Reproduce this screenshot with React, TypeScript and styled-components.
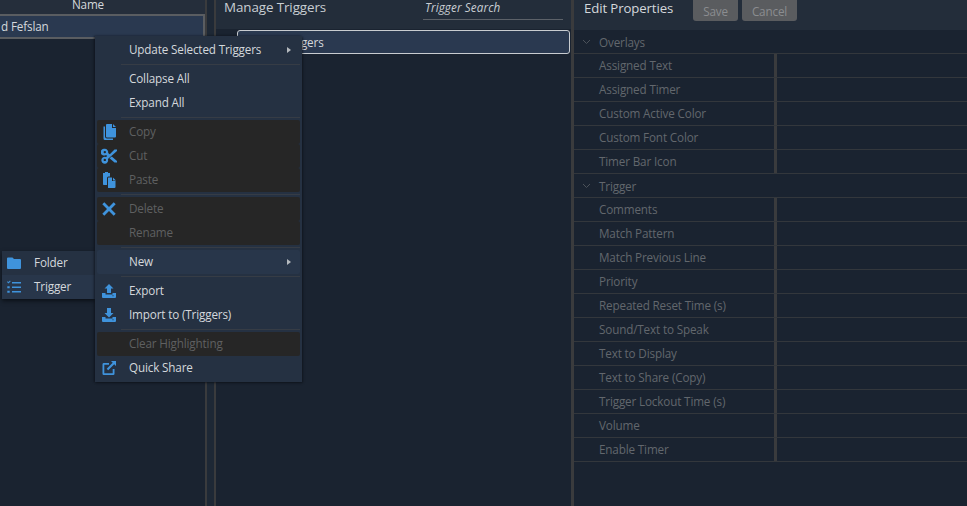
import React from "react";
import styled, { createGlobalStyle } from "styled-components";

const Global = createGlobalStyle`
  html, body { margin: 0; padding: 0; height: 506px; overflow: hidden; background: #1a2330; }
  #root { height: 506px; }
  * { box-sizing: border-box; }
`;

const Shell = styled.div`
  position: relative;
  width: 967px;
  height: 506px;
  display: grid;
  grid-template-columns: 205px 2px 7px 2px 355px 3px 1fr;
  background: #1a2330;
  font-family: "Open Sans", "Noto Sans", sans-serif;
  font-size: 11.7px;
  letter-spacing: -0.15px;
  overflow: hidden;
`;

const Splitter = styled.div`
  background: #3a3b3d;
`;

const Gutter = styled.div`
  background: #1e2835;
`;

const LeftPane = styled.section`
  display: flex;
  flex-direction: column;
`;

const ColumnHeader = styled.div`
  height: 14px;
  background: #252e3b;
  color: #d4d8dc;
  text-align: center;
  padding-right: 29px;
  line-height: 9px;
  overflow: hidden;
`;

const SelectedPlayer = styled.div`
  height: 25px;
  background: #2a3950;
  border-top: 2px solid #5a5d61;
  border-right: 2px solid #5a5d61;
  border-bottom: 2px solid #5a5d61;
  color: #d4d8dc;
  padding-left: 1px;
  line-height: 21px;
  white-space: nowrap;
  overflow: hidden;
`;

const MiddlePane = styled.section`
  display: flex;
  flex-direction: column;
`;

const PaneHeader = styled.header`
  height: 29px;
  background: #232d3a;
  display: flex;
  align-items: flex-start;
  flex-shrink: 0;
`;

const ManageTitle = styled.h2`
  margin: 0;
  padding-left: 8px;
  width: 207px;
  font-size: 13.4px;
  letter-spacing: -0.1px;
  line-height: 15px;
  font-weight: 400;
  color: #c9ced3;
`;

const SearchField = styled.div`
  width: 140px;
  height: 20px;
  border-bottom: 1px solid #5c6168;
  padding-left: 2px;
  color: #c9ced3;
  font-style: italic;
  letter-spacing: 0.1px;
  line-height: 15px;
`;

const TreeBody = styled.div`
  padding: 1px 1px 0 21px;
`;

const TreeRow = styled.div`
  height: 24px;
  background: #2a3950;
  border: 1px solid #c8ccd0;
  border-radius: 3px;
  color: #d4d8dc;
  display: flex;
  align-items: center;
  padding-left: 5px;
  gap: 26px;
`;

const TreeSwatch = styled.span`
  width: 12px;
  height: 12px;
  background: #6b727b;
  border-radius: 2px;
`;

const RightPane = styled.section`
  display: flex;
  flex-direction: column;
`;

const PropsHeader = styled.header`
  height: 30px;
  background: #232d3a;
  display: flex;
  align-items: flex-start;
  padding-left: 10px;
  flex-shrink: 0;
`;

const PropsTitle = styled.h2`
  margin: 0;
  width: 109px;
  font-size: 13.2px;
  letter-spacing: -0.1px;
  line-height: 16px;
  font-weight: 400;
  color: #d4d8dc;
`;

const HeaderButton = styled.button<{ $w: number }>`
  height: 21px;
  margin-right: 4px;
  padding: 0;
  width: ${(p) => p.$w}px;
  border: none;
  border-radius: 0 0 3px 3px;
  background: #5a5c5f;
  color: #8b8d90;
  font-family: inherit;
  font-size: 11.7px;
  letter-spacing: -0.15px;
  line-height: 18px;
`;

const Grid = styled.div`
  display: flex;
  flex-direction: column;
`;

const GroupRow = styled.div`
  height: 24px;
  border-bottom: 1px solid #33373c;
  display: flex;
  align-items: center;
  color: #62676d;
  padding-left: 8px;
  gap: 8px;
  & svg { flex-shrink: 0; }
`;

const PropRow = styled.div`
  height: 24px;
  border-bottom: 1px solid #33373c;
  display: grid;
  grid-template-columns: 200px 3px 1fr;
`;

const PropLabel = styled.div`
  color: #62676d;
  padding-left: 25px;
  line-height: 23px;
  white-space: nowrap;
`;

const PropDivider = styled.div`
  background: #3a3b3d;
`;

const Menu = styled.div`
  position: absolute;
  left: 95px;
  top: 36px;
  width: 207px;
  height: 346px;
  background: #253142;
  padding: 2px;
  box-shadow: -1px 0 2px rgba(10, 14, 20, 0.6), 1px 1px 2px rgba(10, 14, 20, 0.5);
  z-index: 2;
`;

const Item = styled.div<{ $disabled?: boolean; $active?: boolean }>`
  position: relative;
  height: 24px;
  line-height: 23px;
  padding-left: 32px;
  color: ${(p) => (p.$disabled ? "#5f6061" : "#d4d8dc")};
  background: ${(p) => (p.$disabled ? "#262626" : p.$active ? "#28364a" : "transparent")};
  border-radius: ${(p) => (p.$disabled || p.$active ? "2px" : "0")};
  white-space: nowrap;
`;

const ItemIcon = styled.span`
  position: absolute;
  left: 4px;
  top: 4px;
  width: 16px;
  height: 16px;
  color: #3f93dc;
  display: block;
  & svg { display: block; width: 16px; height: 16px; fill: currentColor; }
`;

const Caret = styled.span`
  position: absolute;
  right: 9px;
  top: 9px;
  width: 0;
  height: 0;
  border-left: 4px solid #b4b9be;
  border-top: 3px solid transparent;
  border-bottom: 3px solid transparent;
`;

const Separator = styled.div`
  height: 5px;
  padding: 2px 0 2px 24px;
  & > div { height: 1px; background: #363c45; }
`;

const SubMenu = styled.div`
  position: absolute;
  left: 2px;
  top: 251px;
  width: 93px;
  height: 48px;
  background: #253142;
  box-shadow: 0 2px 4px rgba(8, 11, 16, 0.8);
  z-index: 1;
`;

const SubItem = styled.div<{ $active?: boolean }>`
  position: relative;
  height: 24px;
  line-height: 23px;
  padding-left: 32px;
  color: #d4d8dc;
  background: ${(p) => (p.$active ? "#28364a" : "transparent")};
`;

const Chevron = () => (
  <svg width="9" height="9" viewBox="0 0 9 9" fill="none" stroke="#4c5259" strokeWidth="1">
    <path d="M1 3l3.5 3.5L8 3" />
  </svg>
);

const icons = {
  copy: "M6 0h5v4h4v8.500a1 1 0 0 1-1 1H6a1 1 0 0 1-1-1V1a1 1 0 0 1 1-1zM12 0l3 3h-3zM2.500 2.500H4V12.500A2 2 0 0 0 6 14.500h6V16H4a1.500 1.500 0 0 1-1.500-1.500z",
  cut: "M3.800 .8a3.400 3.400 0 0 1 3.300 4.300L8.800 6.200 13.500 1.500H16V3L6.900 11a3.400 3.400 0 1 1-1.900-1.900L6.300 8 5 6.900A3.400 3.400 0 1 1 3.800 .8zm0 2.100a1.200 1.200 0 1 0 0 2.400 1.200 1.200 0 0 0 0-2.400zm0 7.800a1.200 1.200 0 1 0 0 2.400 1.200 1.200 0 0 0 0-2.400zM10.800 8.500 16 13v1.500h-2.500L8.500 10.300z",
  paste: "M2 1h2V0h3v1h2v3.500H7.500A1.500 1.500 0 0 0 6 6v7H2.800a.8.8 0 0 1-.8-.8zM7.500 5.500H11V9h3.500v6a1 1 0 0 1-1 1h-6a.5.5 0 0 1-.5-.5V6a.5.5 0 0 1 .5-.5zM12 5.500 15 8.500h-3z",
  del: "M3.300 1.300 8 6l4.700-4.700 2 2L10 8l4.700 4.700-2 2L8 10l-4.700 4.700-2-2L6 8 1.300 3.300z",
  exp: "M8 1l4.500 4.500H10V10H6V5.500H3.500zM1 10h3.500v1.500h7V10H15v4a1 1 0 0 1-1 1H2a1 1 0 0 1-1-1zm10.500 2.200v1h1v-1z",
  imp: "M6 1h4v5h2.500L8 10.500 3.500 6H6zM1 10h3.500v1.500h7V10H15v4a1 1 0 0 1-1 1H2a1 1 0 0 1-1-1zm10.500 2.200v1h1v-1z",
  share: "M2.500 3H8v1.800H3.300v8.400h8.400V9h1.800v4.800a1.200 1.200 0 0 1-1.200 1.200H2.700a1.200 1.200 0 0 1-1.200-1.200V4.200A1.200 1.200 0 0 1 2.500 3zM10 1h5v5l-1.800-1.800-6 6-1.500-1.400 6-6z",
  folder: "M1 3.500a1 1 0 0 1 1-1h4.500L8 4h6a1 1 0 0 1 1 1v8a1 1 0 0 1-1 1H2a1 1 0 0 1-1-1z",
  list: "M6 3h9v1.500H6zM6 7.500h9V9H6zM6 12h9v1.500H6zM1 3l.7-.7.8.8L4 1.500l.7.7L2.500 4.500zM1.300 7.200h2.400v2H1.300zm0 4.500h2.400v2H1.300z",
};

const Ico = ({ d }: { d: string }) => (
  <ItemIcon>
    <svg viewBox="0 0 16 16"><path d={d} fillRule="evenodd" /></svg>
  </ItemIcon>
);

const overlays = ["Assigned Text", "Assigned Timer", "Custom Active Color", "Custom Font Color", "Timer Bar Icon"];
const triggers = [
  "Comments",
  "Match Pattern",
  "Match Previous Line",
  "Priority",
  "Repeated Reset Time (s)",
  "Sound/Text to Speak",
  "Text to Display",
  "Text to Share (Copy)",
  "Trigger Lockout Time (s)",
  "Volume",
  "Enable Timer",
];

const Sep = () => (
  <Separator>
    <div />
  </Separator>
);

export default function App() {
  return (
    <Shell>
      <Global />
      <LeftPane>
        <ColumnHeader>Name</ColumnHeader>
        <SelectedPlayer>d Fefslan</SelectedPlayer>
      </LeftPane>
      <Splitter />
      <Gutter />
      <Splitter />
      <MiddlePane>
        <PaneHeader>
          <ManageTitle>Manage Triggers</ManageTitle>
          <SearchField>Trigger Search</SearchField>
        </PaneHeader>
        <TreeBody>
          <TreeRow>
            <TreeSwatch />
            <span>Triggers</span>
          </TreeRow>
        </TreeBody>
      </MiddlePane>
      <Splitter />
      <RightPane>
        <PropsHeader>
          <PropsTitle>Edit Properties</PropsTitle>
          <HeaderButton $w={45}>Save</HeaderButton>
          <HeaderButton $w={55}>Cancel</HeaderButton>
        </PropsHeader>
        <Grid>
          <GroupRow>
            <Chevron />
            Overlays
          </GroupRow>
          {overlays.map((t) => (
            <PropRow key={t}>
              <PropLabel>{t}</PropLabel>
              <PropDivider />
            </PropRow>
          ))}
          <GroupRow>
            <Chevron />
            Trigger
          </GroupRow>
          {triggers.map((t) => (
            <PropRow key={t}>
              <PropLabel>{t}</PropLabel>
              <PropDivider />
            </PropRow>
          ))}
        </Grid>
      </RightPane>

      <SubMenu>
        <SubItem>
          <Ico d={icons.folder} />
          Folder
        </SubItem>
        <SubItem $active>
          <Ico d={icons.list} />
          Trigger
        </SubItem>
      </SubMenu>

      <Menu>
        <Item>
          Update Selected Triggers
          <Caret />
        </Item>
        <Sep />
        <Item>Collapse All</Item>
        <Item>Expand All</Item>
        <Sep />
        <Item $disabled>
          <Ico d={icons.copy} />
          Copy
        </Item>
        <Item $disabled>
          <Ico d={icons.cut} />
          Cut
        </Item>
        <Item $disabled>
          <Ico d={icons.paste} />
          Paste
        </Item>
        <Sep />
        <Item $disabled>
          <Ico d={icons.del} />
          Delete
        </Item>
        <Item $disabled>Rename</Item>
        <Sep />
        <Item $active>
          New
          <Caret />
        </Item>
        <Sep />
        <Item>
          <Ico d={icons.exp} />
          Export
        </Item>
        <Item>
          <Ico d={icons.imp} />
          Import to (Triggers)
        </Item>
        <Sep />
        <Item $disabled>Clear Highlighting</Item>
        <Item>
          <Ico d={icons.share} />
          Quick Share
        </Item>
      </Menu>
    </Shell>
  );
}
